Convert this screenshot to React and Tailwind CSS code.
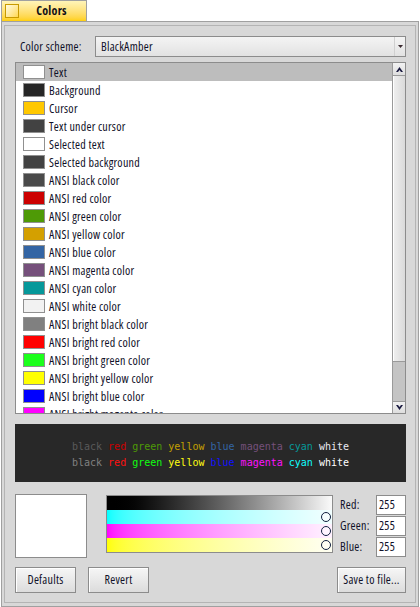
import React from "react";

const rows = [
  ["Text", "#ffffff"],
  ["Background", "#262626"],
  ["Cursor", "#ffc800"],
  ["Text under cursor", "#424242"],
  ["Selected text", "#ffffff"],
  ["Selected background", "#424242"],
  ["ANSI black color", "#4a4a4a"],
  ["ANSI red color", "#cc0000"],
  ["ANSI green color", "#4e9a06"],
  ["ANSI yellow color", "#d4a000"],
  ["ANSI blue color", "#3465a4"],
  ["ANSI magenta color", "#75507b"],
  ["ANSI cyan color", "#06989a"],
  ["ANSI white color", "#f2f2f2"],
  ["ANSI bright black color", "#808080"],
  ["ANSI bright red color", "#ff0000"],
  ["ANSI bright green color", "#1cff1c"],
  ["ANSI bright yellow color", "#ffff00"],
  ["ANSI bright blue color", "#0000ff"],
  ["ANSI bright magenta color", "#ff00ff"],
];

const line1 = [
  ["black", "#5a5a5a"],
  ["red", "#cc0000"],
  ["green", "#4e9a06"],
  ["yellow", "#c4a000"],
  ["blue", "#3465a4"],
  ["magenta", "#75507b"],
  ["cyan", "#06989a"],
  ["white", "#e8e8f0"],
];
const line2 = [
  ["black", "#808080"],
  ["red", "#ff1010"],
  ["green", "#10ff10"],
  ["yellow", "#ffff10"],
  ["blue", "#1010ff"],
  ["magenta", "#ff10ff"],
  ["cyan", "#10ffff"],
  ["white", "#ffffff"],
];

function Line({ items }) {
  return (
    <div className="h-[16px] leading-[16px] whitespace-pre">
      {items.map(([w, c], i) => (
        <span key={i} style={{ color: c }}>
          {w}
          {i < items.length - 1 ? " " : ""}
        </span>
      ))}
    </div>
  );
}

function Arrow({ up }) {
  return (
    <svg width="7" height="5" viewBox="0 0 7 5" className={up ? "" : "rotate-180"}>
      <path d="M3.5 0 L7 5 L5 5 L3.5 3 L2 5 L0 5 Z" fill="#1a1a40" />
    </svg>
  );
}

function Button({ children, w }) {
  return (
    <div
      className={`${w} h-[26px] border border-[#8c8c8c] bg-gradient-to-b from-[#f6f6f6] to-[#dcdcdc] shadow-[inset_1px_1px_0_#ffffff] flex items-center justify-center text-[#101028] whitespace-nowrap`}
    >
      {children}
    </div>
  );
}

function Handle() {
  return (
    <div className="absolute right-[1px] top-[2px] w-[10px] h-[10px] rounded-full border-[1.5px] border-[#102040] bg-white/40" />
  );
}

export default function App() {
  return (
    <div
      className="w-[420px] h-[607px] bg-white text-[12px] tracking-[0.25px] text-[#101028] overflow-hidden"
      style={{ fontFamily: '"Open Sans", "Liberation Sans", sans-serif', fontStretch: "75%" }}
    >
      {/* tab row */}
      <div className="h-[21px] flex pl-[1px]">
        <div className="w-[86px] h-[21px] border-l border-t border-r border-[#a0a0a0] bg-gradient-to-b from-[#fff4b8] to-[#ffd000] flex items-center">
          <div className="ml-[3px] w-[14px] h-[14px] border border-[#c89a00] bg-gradient-to-br from-[#fffbe0] to-[#ffd84a]" />
          <div className="flex-1 text-center font-bold text-[12px] pr-[2px] text-[#101018]">Colors</div>
        </div>
      </div>

      {/* panel */}
      <div className="mx-[1px] h-[586px] border border-[#a0a0a0] bg-[#d8d8d8] pt-[3px] px-[2px] pb-[3px]">
        <div className="h-full border border-[#b4b4b4] pl-[10px] pr-[9px] pt-[10px] flex flex-col">
          {/* color scheme */}
          <div className="flex items-center h-[21px]">
            <div className="w-[80px] pl-[5px] whitespace-nowrap">Color scheme:</div>
            <div className="flex-1 h-[21px] border border-[#8c8c8c] bg-gradient-to-b from-[#f4f4f4] to-[#e2e2e2] flex items-center">
              <div className="flex-1 pl-[5px]">BlackAmber</div>
              <div className="w-[11px] h-full border-l border-[#d0d0d0] flex items-center justify-center">
                <svg width="5" height="3" viewBox="0 0 5 3">
                  <path d="M0 0 L5 0 L2.5 3 Z" fill="#3a2a30" />
                </svg>
              </div>
            </div>
          </div>

          {/* list */}
          <div className="mt-[5px] h-[352px] border border-[#8c8c8c] bg-white flex">
            <div className="flex-1 overflow-hidden">
              {rows.map(([name, color], i) => (
                <div
                  key={i}
                  className={`h-[18px] flex items-center pl-[7px] ${i === 0 ? "bg-[#bdbdbd]" : ""}`}
                >
                  <div
                    className="w-[22px] h-[14px] border border-[#909090] shrink-0"
                    style={{ backgroundColor: color }}
                  />
                  <div className="ml-[4px] pt-[1px] whitespace-nowrap">{name}</div>
                </div>
              ))}
            </div>
            <div className="w-[13px] border-l border-[#9a9a9a] flex flex-col bg-[#c4c4c4]">
              <div className="h-[13px] border-b border-[#9a9a9a] bg-gradient-to-b from-[#f2f2f2] to-[#dedede] flex items-center justify-center">
                <Arrow up />
              </div>
              <div className="h-[286px] border-b border-[#9a9a9a] bg-gradient-to-r from-[#f0f0f0] to-[#dadada] shadow-[inset_1px_0_0_#ffffff]" />
              <div className="flex-1" />
              <div className="h-[12px] border-t border-[#9a9a9a] bg-gradient-to-b from-[#f2f2f2] to-[#dedede] flex items-center justify-center">
                <Arrow />
              </div>
            </div>
          </div>

          {/* preview */}
          <div
            className="mt-[10px] h-[58px] bg-[#282828] flex flex-col items-center pt-[15px] text-[10px] tracking-normal"
            style={{ fontFamily: '"DejaVu Sans Mono", monospace', fontStretch: "100%" }}
          >
            <Line items={line1} />
            <Line items={line2} />
          </div>

          {/* picker */}
          <div className="mt-[12px] flex h-[64px]">
            <div className="w-[72px] h-[64px] border border-[#8c8c8c] bg-white" />
            <div className="ml-[19px] mt-[1px] w-[227px] h-[58px] border border-[#8c8c8c] flex flex-col">
              <div className="h-[14px] bg-gradient-to-r from-[#000000] to-[#fafafa]" />
              <div className="relative h-[14px] bg-gradient-to-r from-[#00ffff] to-[#f2ffff]">
                <Handle />
              </div>
              <div className="relative h-[14px] bg-gradient-to-r from-[#ff00ff] to-[#fff2ff]">
                <Handle />
              </div>
              <div className="relative h-[14px] bg-gradient-to-r from-[#ffff00] to-[#fffff2]">
                <Handle />
              </div>
            </div>
            <div className="ml-[7px] w-[36px] flex flex-col gap-[1px] mt-[1px]">
              <div className="h-[20px] flex items-center">Red:</div>
              <div className="h-[20px] flex items-center">Green:</div>
              <div className="h-[20px] flex items-center">Blue:</div>
            </div>
            <div className="w-[30px] flex flex-col gap-[1px] mt-[1px]">
              <div className="h-[20px] border border-[#8c8c8c] bg-white pl-[2px] flex items-center">255</div>
              <div className="h-[20px] border border-[#8c8c8c] bg-white pl-[2px] flex items-center">255</div>
              <div className="h-[20px] border border-[#8c8c8c] bg-white pl-[2px] flex items-center">255</div>
            </div>
          </div>

          {/* buttons */}
          <div className="mt-[9px] flex items-center">
            <Button w="w-[61px]">Defaults</Button>
            <div className="ml-[12px]">
              <Button w="w-[61px]">Revert</Button>
            </div>
            <div className="flex-1" />
            <Button w="w-[69px]">Save to file...</Button>
          </div>
        </div>
      </div>
    </div>
  );
}
